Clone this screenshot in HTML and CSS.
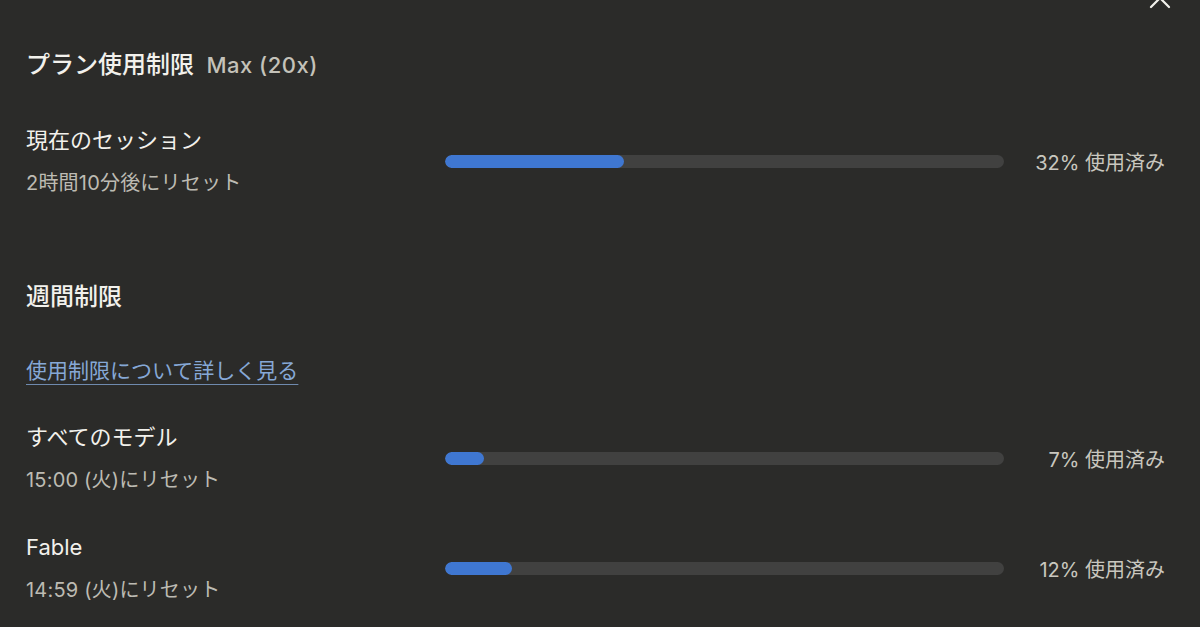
FILE: index.html
```html
<!DOCTYPE html>
<html lang="ja">
<head>
    <meta charset="UTF-8">
    <meta name="viewport" content="width=device-width, initial-scale=1.0">
    <title>プラン使用制限</title>
    <link rel="stylesheet" href="styles.css">
</head>
<body>
    <div class="panel">
        <button class="close" aria-label="閉じる">
            <svg width="26" height="26" viewBox="0 0 26 26"><path d="M4 4 L22 22 M22 4 L4 22" stroke="#f2f1ec" stroke-width="2.2" stroke-linecap="round"/></svg>
        </button>

        <h2 class="title">プラン使用制限 <span class="plan">Max (20x)</span></h2>

        <div class="row row-session">
            <div class="info">
                <div class="name">現在のセッション</div>
                <div class="sub">2時間10分後にリセット</div>
            </div>
            <div class="track"><div class="fill" style="width: 32%"></div></div>
            <div class="used">32% 使用済み</div>
        </div>

        <h2 class="section">週間制限</h2>
        <a class="link" href="#">使用制限について詳しく見る</a>

        <div class="row row-all">
            <div class="info">
                <div class="name">すべてのモデル</div>
                <div class="sub">15:00 (火)にリセット</div>
            </div>
            <div class="track"><div class="fill" style="width: 7%"></div></div>
            <div class="used">7% 使用済み</div>
        </div>

        <div class="row row-fable">
            <div class="info">
                <div class="name">Fable</div>
                <div class="sub">14:59 (火)にリセット</div>
            </div>
            <div class="track"><div class="fill" style="width: 12%"></div></div>
            <div class="used">12% 使用済み</div>
        </div>
    </div>
</body>
</html>
```

FILE: styles.css
```css
html, body {
    margin: 0;
    height: 100%;
}
body {
    background-color: #2b2b29;
    color: #f2f1ec;
    font-family: Inter, "Noto Sans CJK JP", sans-serif;
    overflow: hidden;
}
.panel {
    position: relative;
    padding: 49px 35px 0 26px;
}
.close {
    position: absolute;
    top: -15px;
    right: 27px;
    background: none;
    border: none;
    padding: 0;
    cursor: pointer;
}
.title {
    margin: 0;
    font-size: 24px;
    line-height: 32px;
    font-weight: 500;
}
.plan {
    margin-left: 6px;
    color: #c4c2b9;
    font-size: 22px;
    font-weight: 500;
    letter-spacing: 0.5px;
}
.row {
    display: flex;
    align-items: center;
}
.row-session {
    margin-top: 45px;
}
.row-all {
    margin-top: 37px;
}
.row-fable {
    margin-top: 39px;
}
.info {
    width: 419px;
    display: flex;
    flex-direction: column;
    gap: 15px;
}
.name {
    font-size: 22px;
    line-height: 28px;
}
.sub {
    font-size: 20px;
    line-height: 28px;
    color: #bdbbb3;
    letter-spacing: 0.2px;
}
.track {
    flex: 1;
    height: 13px;
    border-radius: 7px;
    background-color: #414140;
    overflow: hidden;
}
.fill {
    height: 100%;
    border-radius: 7px;
    background-color: #3f77d1;
}
.used {
    width: 161px;
    text-align: right;
    font-size: 20px;
    color: #c9c7bf;
}
.section {
    margin: 84px 0 0;
    font-size: 24px;
    line-height: 32px;
    font-weight: 500;
}
.link {
    display: inline-block;
    margin-top: 43px;
    font-size: 21px;
    line-height: 30px;
    color: #86a8d6;
    text-decoration: underline;
    text-decoration-color: #6f8aae;
    text-underline-offset: 6px;
    text-decoration-thickness: 1px;
}
```
